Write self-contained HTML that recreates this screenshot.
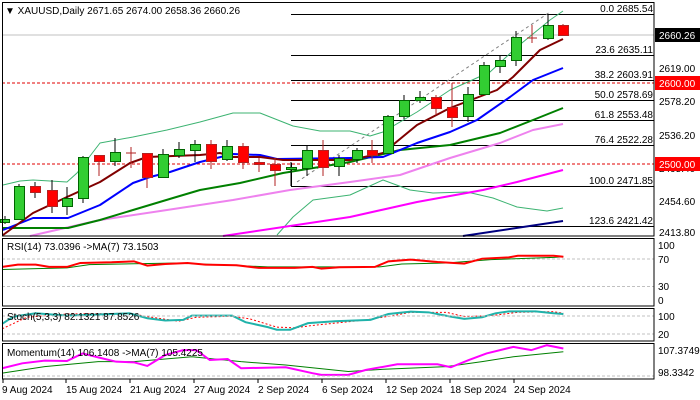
<!DOCTYPE html>
<html><head><meta charset="utf-8"><style>
html,body{margin:0;padding:0;background:#fff;}
svg{display:block;font-family:"Liberation Sans",sans-serif;font-size:10px;}
</style></head><body>
<svg width="700" height="400" viewBox="0 0 700 400" xmlns="http://www.w3.org/2000/svg">
<rect width="700" height="400" fill="#fff"/>
<!-- main panel -->
<line x1="2" y1="35" x2="654" y2="35" stroke="#c0c0c0"/>
<line x1="2" y1="83" x2="654" y2="83" stroke="#e00000" stroke-dasharray="3,2"/>
<line x1="2" y1="164" x2="654" y2="164" stroke="#e00000" stroke-dasharray="3,2"/>
<g stroke="#000" stroke-width="1">
<line x1="291" y1="14.5" x2="654" y2="14.5"/>
<line x1="291" y1="55.5" x2="654" y2="55.5"/>
<line x1="291" y1="80.5" x2="654" y2="80.5"/>
<line x1="291" y1="100.5" x2="654" y2="100.5"/>
<line x1="291" y1="120.5" x2="654" y2="120.5"/>
<line x1="291" y1="145.5" x2="654" y2="145.5"/>
<line x1="291" y1="186.5" x2="654" y2="186.5"/>
<line x1="291" y1="226.5" x2="654" y2="226.5"/>
<line x1="291.5" y1="163" x2="291.5" y2="186"/>
</g>
<line x1="297" y1="182" x2="550" y2="12" stroke="#808080" stroke-dasharray="3,3"/>
<g fill="none" stroke-linejoin="round">
<polyline stroke="#3cb371" stroke-width="1" points="3,185 20,181 33,180 67,182 77,173 100,143 133,137 167,130 200,122 233,113 260,113 293,126 320,131 350,131 370,136 383,132 417,112 450,90 490,72 517,47 550,20 563,11"/>
<polyline stroke="#3cb371" stroke-width="1" points="277,235 293,217 313,200 350,195 383,180 410,190 433,193 467,192 493,198 517,207 547,211 563,208"/>
<polyline stroke="#000080" stroke-width="2" points="463,236 563,221"/>
<polyline stroke="#ff00ff" stroke-width="2" points="223,236 350,217 417,202 483,190 517,182 563,170"/>
<polyline stroke="#ee82ee" stroke-width="2" points="30,236 100,220 167,210 233,200 290,190 350,182 400,175 450,158 500,143 533,130 563,124"/>
<polyline stroke="#008000" stroke-width="2" points="3,228 68,228 100,220 133,210 173,198 200,190 240,183 283,173 350,162 400,150 450,145 500,133 533,120 563,108"/>
<polyline stroke="#0000ff" stroke-width="2" points="3,230 33,218 68,218 100,205 133,183 150,177 170,172 200,162 233,154 260,155 277,159 350,158 383,157 417,143 450,132 477,120 510,97 533,80 563,68"/>
<polyline stroke="#800000" stroke-width="2" points="3,235 33,213 67,197 100,182 130,163 147,157 173,156 200,155 220,153 233,157 260,157 283,160 350,160 383,153 417,125 450,108 497,90 513,77 540,50 563,39"/>
</g>
<g stroke-width="1">
<!-- candles: x, wick top, wick bottom, body top, body bottom -->
<g stroke="#000" >
<line x1="5" y1="216" x2="5" y2="224"/><line x1="19" y1="184" x2="19" y2="219"/><line x1="35" y1="182" x2="35" y2="198"/><line x1="52" y1="180" x2="52" y2="213"/><line x1="67" y1="187" x2="67" y2="215"/><line x1="83" y1="156" x2="83" y2="203"/><line x1="115" y1="138" x2="115" y2="166"/><line x1="163" y1="149" x2="163" y2="177"/><line x1="179" y1="142" x2="179" y2="158"/><line x1="195" y1="140" x2="195" y2="162"/><line x1="227" y1="140" x2="227" y2="161"/><line x1="291" y1="162" x2="291" y2="186"/><line x1="307" y1="145" x2="307" y2="176"/><line x1="339" y1="155" x2="339" y2="176"/><line x1="357" y1="148" x2="357" y2="163"/><line x1="388" y1="115" x2="388" y2="153"/><line x1="404" y1="95" x2="404" y2="119"/><line x1="420" y1="91" x2="420" y2="103"/><line x1="468" y1="87" x2="468" y2="122"/><line x1="484" y1="62" x2="484" y2="94"/><line x1="500" y1="55" x2="500" y2="73"/><line x1="516" y1="31" x2="516" y2="66"/><line x1="548" y1="14" x2="548" y2="40"/>
</g>
<g stroke="#b22222">
<line x1="99" y1="155" x2="99" y2="176"/><line x1="131" y1="147" x2="131" y2="168"/><line x1="126" y1="153" x2="136" y2="153"/><line x1="147" y1="153" x2="147" y2="188"/><line x1="211" y1="140" x2="211" y2="169"/><line x1="243" y1="143" x2="243" y2="169"/><line x1="259" y1="158" x2="259" y2="172"/><line x1="275" y1="158" x2="275" y2="186"/><line x1="323" y1="140" x2="323" y2="176"/><line x1="372" y1="140" x2="372" y2="163"/><line x1="436" y1="95" x2="436" y2="115"/><line x1="452" y1="83" x2="452" y2="127"/><line x1="532" y1="25" x2="532" y2="43"/><line x1="527" y1="38" x2="537" y2="38"/><line x1="563" y1="24" x2="563" y2="36"/>
</g>
<g fill="#32cd32" stroke="#006400">
<rect x="0.5" y="219.5" width="9" height="3"/><rect x="14.5" y="186.5" width="10" height="33"/><rect x="62.5" y="198.5" width="10" height="8"/><rect x="78.5" y="157.5" width="10" height="41"/><rect x="110.5" y="152.5" width="10" height="9"/><rect x="158.5" y="154.5" width="10" height="23"/><rect x="174.5" y="149.5" width="10" height="6"/><rect x="190.5" y="144.5" width="10" height="6"/><rect x="222.5" y="146.5" width="10" height="13"/><rect x="286.5" y="167.5" width="10" height="2"/><rect x="302.5" y="150.5" width="10" height="18"/><rect x="334.5" y="158.5" width="10" height="8"/><rect x="352.5" y="150.5" width="10" height="9"/><rect x="383.5" y="116.5" width="10" height="37"/><rect x="399.5" y="100.5" width="10" height="16"/><rect x="415.5" y="97.5" width="10" height="3"/><rect x="463.5" y="94.5" width="10" height="22"/><rect x="479.5" y="65.5" width="10" height="29"/><rect x="495.5" y="60.5" width="10" height="6"/><rect x="511.5" y="37.5" width="10" height="23"/><rect x="543.5" y="25.5" width="10" height="13"/>
</g>
<g fill="#ff0000" stroke="#b22222">
<rect x="30.5" y="186.5" width="10" height="6"/><rect x="47.5" y="190.5" width="10" height="16"/><rect x="94.5" y="155.5" width="10" height="6"/><rect x="142.5" y="153.5" width="10" height="24"/><rect x="206.5" y="144.5" width="10" height="17"/><rect x="238.5" y="146.5" width="10" height="16"/><rect x="254.5" y="162.5" width="10" height="2"/><rect x="270.5" y="164.5" width="10" height="6"/><rect x="318.5" y="150.5" width="10" height="17"/><rect x="367.5" y="150.5" width="10" height="5"/><rect x="431.5" y="97.5" width="10" height="11"/><rect x="447.5" y="107.5" width="10" height="10"/><rect x="558.5" y="25.5" width="10" height="10"/>
</g>
</g>
<text x="5" y="14" font-size="10">▼ XAUUSD,Daily  2671.65 2674.00 2658.36 2660.26</text>
<g text-anchor="end" font-size="10" fill="#000">
<text x="653" y="12">0.0 2685.54</text>
<text x="653" y="53">23.6 2635.11</text>
<text x="653" y="78">38.2 2603.91</text>
<text x="653" y="98">50.0 2578.69</text>
<text x="653" y="118">61.8 2553.48</text>
<text x="653" y="143">76.4 2522.28</text>
<text x="653" y="184">100.0 2471.85</text>
<text x="653" y="224">123.6 2421.42</text>
</g>
<rect x="2.5" y="2.5" width="651.5" height="233.5" fill="none" stroke="#000"/>
<!-- price axis -->
<g font-size="10">
<text x="659" y="72">2619.00</text>
<text x="659" y="105">2578.20</text>
<text x="659" y="139">2536.20</text>
<text x="659" y="172">2495.40</text>
<text x="659" y="205">2454.60</text>
<text x="659" y="236">2413.80</text>
</g>
<rect x="655" y="28" width="45" height="14" fill="#000"/><text x="659" y="39" fill="#fff">2660.26</text>
<rect x="655" y="76" width="45" height="14" fill="#ff0000"/><text x="659" y="87" fill="#fff">2600.00</text>
<rect x="655" y="157" width="45" height="14" fill="#ff0000"/><text x="659" y="168" fill="#fff">2500.00</text>
<!-- RSI -->
<line x1="2" y1="259" x2="654" y2="259" stroke="#c0c0c0" stroke-dasharray="3,2"/>
<line x1="2" y1="286.5" x2="654" y2="286.5" stroke="#c0c0c0" stroke-dasharray="3,2"/>
<g transform="translate(0,235) scale(0.4464,0.329)" fill="none">
<polyline vector-effect="non-scaling-stroke" stroke="#008000" stroke-width="1" points="5,105 150,100 200,90 400,85 600,97 850,97 900,88 1000,85 1100,75 1240,68 1262,66"/>
<polyline vector-effect="non-scaling-stroke" stroke="#ff0000" stroke-width="2" points="5,97 40,90 80,90 110,97 150,97 180,85 250,83 300,80 330,93 370,88 420,85 460,90 530,92 580,100 660,100 700,97 720,102 760,98 840,97 870,80 920,75 980,82 1040,87 1080,72 1140,68 1160,63 1240,63 1262,66"/>
<polyline vector-effect="non-scaling-stroke" stroke="#ff0000" stroke-width="1" stroke-dasharray="2,2" points="5,285 60,250 150,240 290,238 330,248 400,262 440,250 520,247 560,255 620,280 660,282 700,275 820,258 880,245 920,235 1000,235 1040,248 1100,245 1160,235 1240,233 1262,238"/>
<polyline vector-effect="non-scaling-stroke" stroke="#20b2aa" stroke-width="2" points="5,270 30,248 80,238 150,245 290,238 330,253 370,260 410,258 430,245 520,245 550,265 600,280 620,288 650,288 690,268 750,262 830,258 870,240 920,233 960,235 1010,248 1040,255 1080,250 1110,238 1140,232 1200,232 1240,238 1262,240"/>
<polyline vector-effect="non-scaling-stroke" stroke="#008000" stroke-width="1" points="5,420 100,400 220,385 300,385 430,370 540,385 640,395 780,415 860,408 1000,400 1080,385 1150,370 1262,355"/>
<polyline vector-effect="non-scaling-stroke" stroke="#ff00ff" stroke-width="2" points="5,405 50,390 100,382 150,383 185,360 220,372 260,385 300,387 330,398 370,365 410,350 440,350 470,380 510,377 540,405 640,402 700,420 720,425 780,425 820,410 890,393 980,393 1010,402 1050,380 1090,360 1150,340 1190,350 1225,335 1262,345"/>
</g>
<rect x="2.5" y="238.5" width="651.5" height="67.5" fill="none" stroke="#000"/>
<text x="7" y="250">RSI(14) 73.0396  -&gt;MA(7) 73.1503</text>
<g font-size="10"><text x="658" y="249">100</text><text x="658" y="263">70</text><text x="658" y="290">30</text><text x="658" y="304">0</text></g>
<!-- Stoch -->
<line x1="2" y1="316" x2="654" y2="316" stroke="#c0c0c0" stroke-dasharray="3,2"/>
<line x1="2" y1="334" x2="654" y2="334" stroke="#c0c0c0" stroke-dasharray="3,2"/>
<rect x="2.5" y="308.5" width="651.5" height="32.5" fill="none" stroke="#000"/>
<text x="7" y="320">Stoch(5,3,3) 82.1321 87.8526</text>
<g font-size="10"><text x="658" y="320">100</text><text x="658" y="338">20</text></g>
<!-- Momentum -->
<line x1="2" y1="376" x2="654" y2="376" stroke="#c0c0c0" stroke-dasharray="3,2"/>
<rect x="2.5" y="343.5" width="651.5" height="35.5" fill="none" stroke="#000"/>
<text x="7" y="356">Momentum(14) 106.1408  -&gt;MA(7) 105.4225</text>
<g font-size="10"><text x="658" y="354">107.3749</text><text x="658" y="376">98.3342</text></g>
<!-- dates -->
<g stroke="#000"><line x1="3" y1="379" x2="3" y2="383"/><line x1="66" y1="379" x2="66" y2="383"/><line x1="130" y1="379" x2="130" y2="383"/><line x1="194" y1="379" x2="194" y2="383"/><line x1="258" y1="379" x2="258" y2="383"/><line x1="322" y1="379" x2="322" y2="383"/><line x1="386" y1="379" x2="386" y2="383"/><line x1="450" y1="379" x2="450" y2="383"/><line x1="514" y1="379" x2="514" y2="383"/></g>
<g font-size="10"><text x="2" y="393">9 Aug 2024</text><text x="66" y="393">15 Aug 2024</text><text x="130" y="393">21 Aug 2024</text><text x="194" y="393">27 Aug 2024</text><text x="258" y="393">2 Sep 2024</text><text x="322" y="393">6 Sep 2024</text><text x="386" y="393">12 Sep 2024</text><text x="450" y="393">18 Sep 2024</text><text x="514" y="393">24 Sep 2024</text></g>
</svg>
</body></html>
